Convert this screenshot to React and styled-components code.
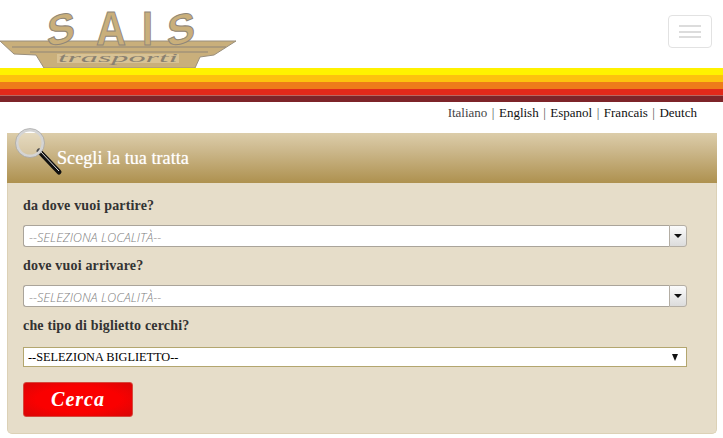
import React from 'react';
import styled, { createGlobalStyle } from 'styled-components';

const GlobalStyle = createGlobalStyle`
  html, body {
    margin: 0;
    padding: 0;
    background: #fff;
    overflow: hidden;
  }
  body {
    font-family: "Liberation Serif", Georgia, serif;
  }
`;

const Page = styled.div`
  width: 723px;
  height: 438px;
  display: flex;
  flex-direction: column;
`;

const TopBar = styled.header`
  height: 68px;
  display: flex;
  justify-content: space-between;
  align-items: flex-start;
`;

const LogoBox = styled.svg`
  display: block;
  width: 240px;
  height: 68px;
`;

const MenuButton = styled.button`
  width: 44px;
  height: 33px;
  margin: 15px 11px 0 0;
  padding: 0;
  display: flex;
  flex-direction: column;
  align-items: center;
  justify-content: center;
  gap: 3.5px;
  background: #fff;
  border: 1px solid #e2e2e2;
  border-radius: 4px;
`;

const MenuBar = styled.span`
  display: block;
  width: 22px;
  height: 2px;
  background: #dcdcdc;
`;

const Stripes = styled.div`
  display: flex;
  flex-direction: column;
`;

const Stripe = styled.div`
  height: ${(p) => p.$h}px;
  background: ${(p) => p.$color};
`;

const LangRow = styled.nav`
  height: 31px;
  padding: 3px 26px 0 0;
  box-sizing: border-box;
  display: flex;
  justify-content: flex-end;
  font-size: 13px;
  line-height: 16px;
  color: #555;
`;

const LangLink = styled.a`
  color: ${(p) => (p.$active ? '#444' : '#111')};
  text-decoration: none;
`;

const Sep = styled.span`
  margin: 0 4.5px;
`;

const Panel = styled.section`
  position: relative;
  margin: 0 6px 0 7px;
  height: 301px;
  box-sizing: border-box;
  background: #e6ddc9;
  border: 1px solid #dcd1b6;
  border-top: 0;
  border-radius: 0 0 5px 5px;
`;

const PanelHead = styled.div`
  height: 50px;
  margin: 0 -1px;
  padding: 14px 0 0 50px;
  box-sizing: border-box;
  background: linear-gradient(#dccdaa, #ccb88c 35%, #ae914f);
  font-size: 18.2px;
  line-height: 22px;
  color: #fff;
  text-shadow: 0 0 1px rgba(255, 255, 255, 0.6);
`;

const Lens = styled.svg`
  position: absolute;
  left: 4px;
  top: -6px;
  width: 54px;
  height: 52px;
`;

const Form = styled.form`
  padding: 13px 29px 0 15px;
  display: flex;
  flex-direction: column;
`;

const Label = styled.label`
  display: block;
  height: 29px;
  font-size: 14px;
  font-weight: 700;
  line-height: 20px;
  letter-spacing: 0.17px;
  color: #333;
`;

const Combo = styled.div`
  display: flex;
  height: 22px;
  margin-bottom: 9px;
  box-sizing: border-box;
`;

const ComboInput = styled.input`
  flex: 1;
  min-width: 0;
  box-sizing: border-box;
  padding: 1px 5px 0;
  background: #fff;
  border: 1px solid #aaa49a;
  border-right: 0;
  border-radius: 3px 0 0 3px;
  outline: 0;
  font-family: "Open Sans", sans-serif;
  font-style: italic;
  font-weight: 300;
  font-size: 12.7px;
  &::placeholder {
    color: #808080;
    opacity: 1;
  }
`;

const ComboButton = styled.button`
  width: 18px;
  padding: 0;
  display: flex;
  align-items: center;
  justify-content: center;
  background: linear-gradient(#fbfbfb, #dcdcdc);
  border: 1px solid #b4aea4;
  border-radius: 0 3px 3px 0;
`;

const Arrow = styled.span`
  width: 0;
  height: 0;
  border-left: ${(p) => p.$w}px solid transparent;
  border-right: ${(p) => p.$w}px solid transparent;
  border-top: ${(p) => p.$h}px solid #111;
`;

const TicketSelect = styled.div`
  height: 20px;
  margin-top: 2px;
  margin-bottom: 15px;
  padding: 0 8px 0 4px;
  box-sizing: border-box;
  display: flex;
  align-items: center;
  justify-content: space-between;
  background: #fff;
  border: 1px solid #b3a66f;
  font-size: 12.3px;
  color: #000;
`;

const SearchButton = styled.button`
  width: 110px;
  height: 35px;
  padding: 0;
  background: radial-gradient(ellipse at center, #fa0000 55%, #d80606);
  border: 1px solid #d6483c;
  border-radius: 3px;
  color: #fff;
  font-family: "Liberation Serif", serif;
  font-size: 20px;
  font-weight: 700;
  font-style: italic;
  letter-spacing: 1px;
`;

const stripes = [
  ['#fff200', 7],
  ['#fdc20e', 7],
  ['#ee7b1a', 7],
  ['#e2291a', 6],
  ['#b9675f', 1],
  ['#7d2429', 6],
];

const langs = ['Italiano', 'English', 'Espanol', 'Francais', 'Deutch'];

const Logo = () => (
  <LogoBox viewBox="0 0 240 68">
    <polygon
      points="0,41 236,41 214,55 200,57 195,68 44,68 36,55 14,54"
      fill="#c9af7b"
      stroke="#9a8f7c"
      strokeWidth="1"
    />
    <path d="M12 47 H226 M30 52 H208" stroke="#8f8678" strokeWidth="1.2" fill="none" />
    <g
      fontFamily="Liberation Sans, sans-serif"
      fontWeight="700"
      fill="#c9af7b"
      stroke="#8f8678"
      strokeWidth="1"
    >
      <text x="0" y="0" fontSize="42" transform="translate(47 47) skewY(-14)">S</text>
      <text x="96" y="45" fontSize="48" textLength="30" lengthAdjust="spacingAndGlyphs">A</text>
      <text x="142" y="45" fontSize="48" textLength="11" lengthAdjust="spacingAndGlyphs">I</text>
      <text x="0" y="0" fontSize="42" transform="translate(167 47) skewY(-14)">S</text>
    </g>
    <rect x="57" y="54" width="122" height="9" fill="#d8c294" />
    <text
      x="58"
      y="62"
      fontFamily="Liberation Serif, serif"
      fontStyle="italic"
      fontSize="12"
      fill="#8a8170"
      textLength="120"
      lengthAdjust="spacingAndGlyphs"
    >
      trasporti
    </text>
  </LogoBox>
);

const Magnifier = () => (
  <Lens viewBox="0 0 54 52">
    <line x1="27" y1="24" x2="47" y2="45" stroke="#111" strokeWidth="5" strokeLinecap="round" />
    <line x1="28" y1="24" x2="47" y2="44" stroke="#e8e8e8" strokeWidth="1" />
    <circle cx="18" cy="16" r="13" fill="#fff" fillOpacity="0.25" stroke="#d4d4d4" strokeWidth="3" />
    <circle cx="18" cy="16" r="14.5" fill="none" stroke="#9c9c9c" strokeWidth="0.6" />
  </Lens>
);

const LocationCombo = () => (
  <Combo>
    <ComboInput placeholder="--SELEZIONA LOCALITÀ--" readOnly />
    <ComboButton type="button">
      <Arrow $w={4} $h={4} />
    </ComboButton>
  </Combo>
);

const App = () => (
  <Page>
    <GlobalStyle />
    <TopBar>
      <Logo />
      <MenuButton type="button">
        <MenuBar />
        <MenuBar />
        <MenuBar />
      </MenuButton>
    </TopBar>
    <Stripes>
      {stripes.map(([color, h]) => (
        <Stripe key={color} $color={color} $h={h} />
      ))}
    </Stripes>
    <LangRow>
      {langs.map((lang, i) => (
        <span key={lang}>
          {i > 0 && <Sep>|</Sep>}
          <LangLink href="#" $active={i === 0}>{lang}</LangLink>
        </span>
      ))}
    </LangRow>
    <Panel>
      <PanelHead>Scegli la tua tratta</PanelHead>
      <Magnifier />
      <Form>
        <Label>da dove vuoi partire?</Label>
        <LocationCombo />
        <Label>dove vuoi arrivare?</Label>
        <LocationCombo />
        <Label>che tipo di biglietto cerchi?</Label>
        <TicketSelect>
          --SELEZIONA BIGLIETTO--
          <Arrow $w={3.5} $h={7} />
        </TicketSelect>
        <SearchButton type="button">Cerca</SearchButton>
      </Form>
    </Panel>
  </Page>
);

export default App;
